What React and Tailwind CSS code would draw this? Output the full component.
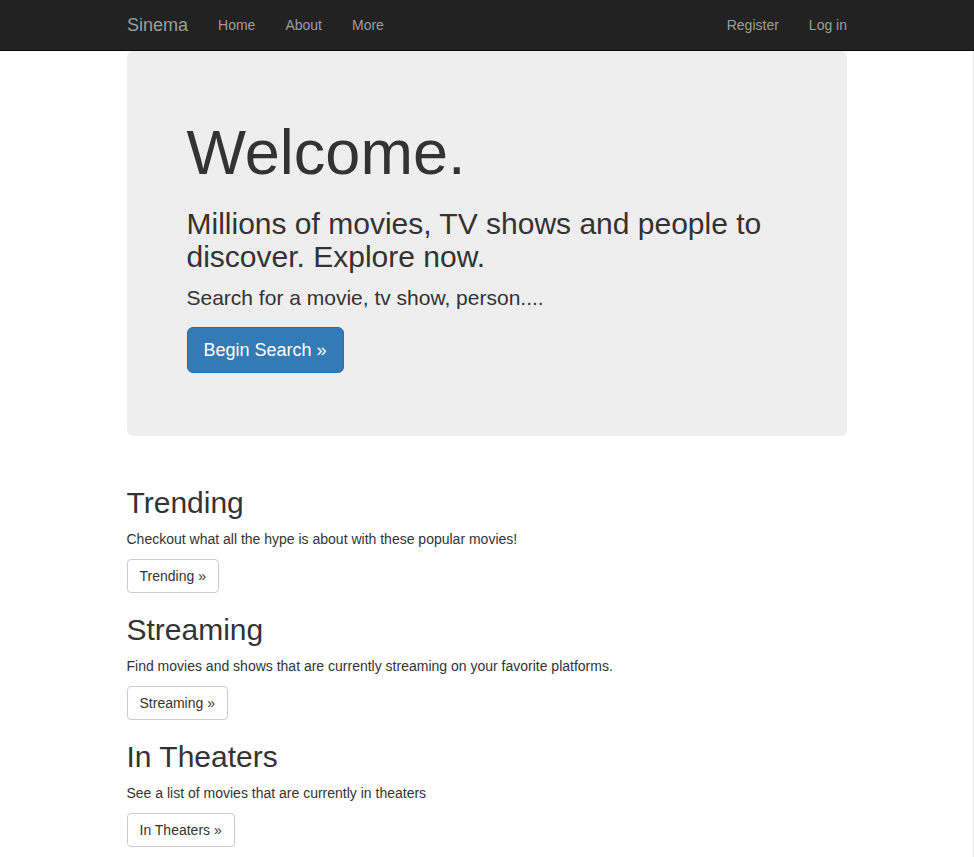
const sections = [
  {
    title: "Trending",
    text: "Checkout what all the hype is about with these popular movies!",
    button: "Trending »",
  },
  {
    title: "Streaming",
    text: "Find movies and shows that are currently streaming on your favorite platforms.",
    button: "Streaming »",
  },
  {
    title: "In Theaters",
    text: "See a list of movies that are currently in theaters",
    button: "In Theaters »",
  },
];

const App = () => {
  return (
    <div className="min-h-screen bg-white text-[#333] font-['Liberation_Sans',Arial,sans-serif] text-[14px] leading-[20px]">
      {/* Navbar */}
      <nav className="h-[51px] bg-[#222] border-b border-[#080808]">
        <div className="w-[750px] mx-auto px-[15px] flex items-center justify-between h-[50px]">
          <div className="flex items-center">
            <a href="#" className="text-[18px] leading-[20px] text-[#9d9d9d] pr-[15px]">
              Sinema
            </a>
            <a href="#" className="px-[15px] text-[#9d9d9d]">Home</a>
            <a href="#" className="px-[15px] text-[#9d9d9d]">About</a>
            <a href="#" className="px-[15px] text-[#9d9d9d]">More</a>
          </div>
          <div className="flex items-center">
            <a href="#" className="px-[15px] text-[#9d9d9d]">Register</a>
            <a href="#" className="pl-[15px] text-[#9d9d9d]">Log in</a>
          </div>
        </div>
      </nav>

      <div className="border-r border-[#e6e6e6] min-h-[806px]">
        <div className="w-[750px] mx-auto px-[15px]">
          {/* Jumbotron */}
          <div className="bg-[#eee] rounded-[6px] px-[60px] pt-[47px] pb-[48px]">
            <h1 className="mt-[20px] mb-[11px] text-[63px] leading-[1.1]">Welcome.</h1>
            <h2 className="mt-[20px] mb-[10px] text-[30px] leading-[1.1]">
              Millions of movies, TV shows and people to discover. Explore now.
            </h2>
            <p className="text-[21px] leading-[30px] mb-[14px]">
              Search for a movie, tv show, person....
            </p>
            <div className="flex pb-[15px]">
              <a
                href="#"
                className="bg-[#337ab7] border border-[#2e6da4] rounded-[6px] px-[16px] py-[10px] text-[18px] leading-[24px] text-white"
              >
                Begin Search »
              </a>
            </div>
          </div>

          {/* Sections */}
          <div className="pt-[30px] pb-[10px]">
            {sections.map((s) => (
              <div key={s.title} className="pt-[20px]">
                <h2 className="mb-[10px] text-[30px] leading-[1.1]">{s.title}</h2>
                <p className="mb-[10px]">{s.text}</p>
                <div className="flex">
                  <a
                    href="#"
                    className="border border-[#ccc] rounded-[4px] px-[12px] py-[6px] leading-[20px] text-[#333] bg-white"
                  >
                    {s.button}
                  </a>
                </div>
              </div>
            ))}
          </div>
        </div>
      </div>
    </div>
  );
};

export default App;
